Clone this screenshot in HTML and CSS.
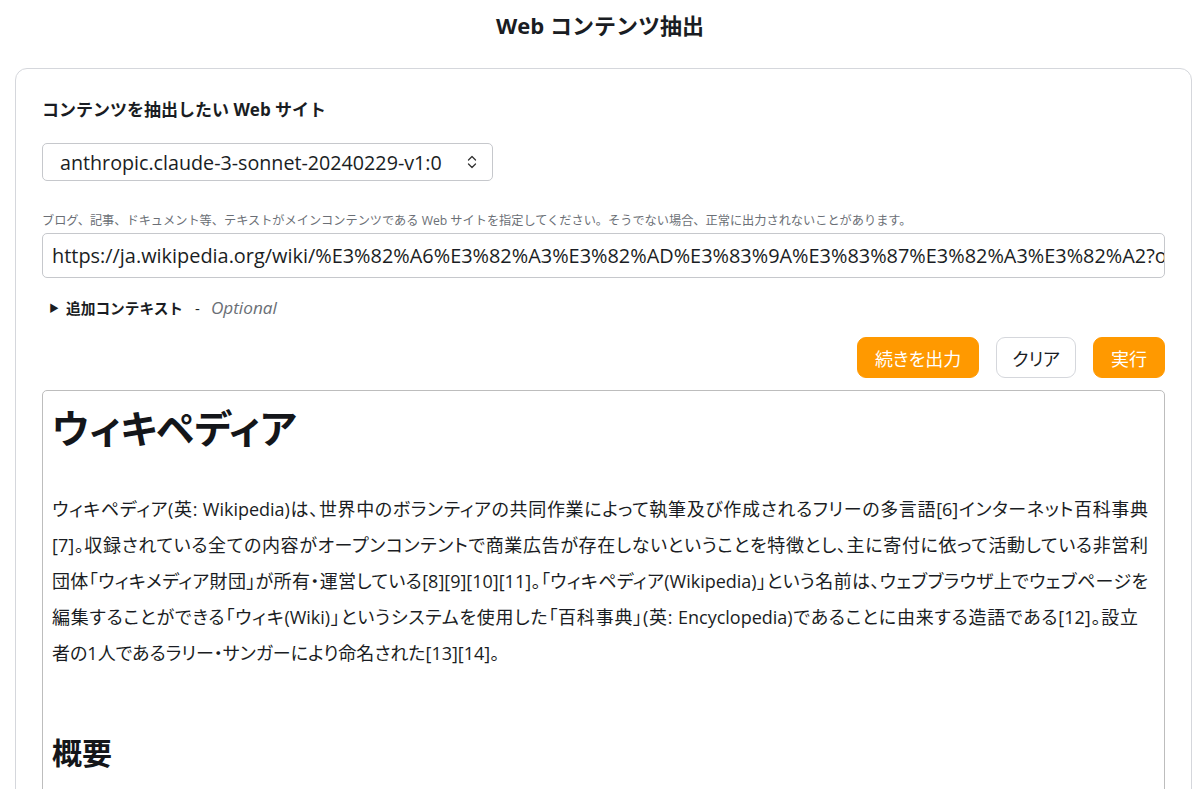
FILE: index.html
```html
<!DOCTYPE html>
<html lang="ja">
<head>
<meta charset="utf-8">
<title>Web コンテンツ抽出</title>
<link rel="stylesheet" href="styles.css">
</head>
<body>
<header class="page-title">Web コンテンツ抽出</header>
<main class="card">
  <div class="field-label">コンテンツを抽出したい Web サイト</div>
  <div class="select">
    <span class="select-text">anthropic.claude-3-sonnet-20240229-v1:0</span>
    <svg class="chev" width="12" height="16" viewBox="0 0 12 16"><path d="M2.5 6 L6 2.5 L9.5 6 M2.5 10 L6 13.5 L9.5 10" fill="none" stroke="#333" stroke-width="1.3" stroke-linecap="round" stroke-linejoin="round"/></svg>
  </div>
  <div class="hint">ブログ、記事、ドキュメント等、テキストがメインコンテンツである Web サイトを指定してください。そうでない場合、正常に出力されないことがあります。</div>
  <div class="url-input">https://ja.wikipedia.org/wiki/%E3%82%A6%E3%82%A3%E3%82%AD%E3%83%9A%E3%83%87%E3%82%A3%E3%82%A2?oldid=1</div>
  <div class="details"><span class="tri">▶</span><span class="det-title">追加コンテキスト</span><span class="dash">-</span><span class="optional">Optional</span></div>
  <div class="actions">
    <button class="btn btn-primary">続きを出力</button>
    <button class="btn btn-light">クリア</button>
    <button class="btn btn-primary">実行</button>
  </div>
  <section class="output">
    <h1>ウィキペディア</h1>
    <p><span class="ln">ウィキペディア(英: Wikipedia)は、世界中のボランティアの共同作業によって執筆及び作成されるフリーの多言語[6]インターネット百科事典</span><span class="ln">[7]。収録されている全ての内容がオープンコンテントで商業広告が存在しないということを特徴とし、主に寄付に依って活動している非営利</span><span class="ln">団体「ウィキメディア財団」が所有・運営している[8][9][10][11]。「ウィキペディア(Wikipedia)」という名前は、ウェブブラウザ上でウェブページを</span><span class="ln ln-short">編集することができる「ウィキ(Wiki)」というシステムを使用した「百科事典」(英: Encyclopedia)であることに由来する造語である[12]。設立</span><span class="ln-last">者の1人であるラリー・サンガーにより命名された[13][14]。</span></p>
    <h2>概要</h2>
  </section>
</main>
</body>
</html>
```
FILE: styles.css
```css
html, body {
  margin: 0;
  padding: 0;
  background: #ffffff;
  height: 100%;
  overflow: hidden;
}
body {
  font-family: "Open Sans", "Noto Sans CJK JP", sans-serif;
  color: #1a1d23;
}
.page-title {
  text-align: center;
  font-size: 22px;
  font-weight: 700;
  line-height: 30px;
  padding-top: 10px;
  height: 68px;
  box-sizing: border-box;
}
.card {
  margin-left: 15px;
  width: 1177px;
  box-sizing: border-box;
  border: 1px solid #d5d7dc;
  border-radius: 12px;
  padding: 30px 26px 0 26px;
  min-height: 800px;
}
.field-label {
  font-size: 17px;
  font-weight: 700;
  line-height: 22px;
  margin-bottom: 22px;
}
.select {
  width: 451px;
  height: 38px;
  box-sizing: border-box;
  border: 1px solid #c6c8cc;
  border-radius: 5px;
  display: flex;
  align-items: center;
  justify-content: space-between;
  padding: 0 14px 0 17px;
}
.select-text {
  font-size: 19.7px;
}
.chev { display: block; }
.hint {
  margin-top: 32px;
  font-size: 12.2px;
  color: #6b6f76;
  line-height: 16px;
}
.url-input {
  margin-top: 4px;
  height: 45px;
  box-sizing: border-box;
  border: 1px solid #c6c8cc;
  border-radius: 5px;
  padding: 0 9px;
  font-size: 19.9px;
  line-height: 43px;
  white-space: nowrap;
  overflow: hidden;
}
.details {
  margin-top: 20px;
  display: flex;
  align-items: center;
  font-size: 15px;
  line-height: 20px;
}
.tri {
  font-size: 10px;
  margin-left: 7px;
  margin-right: 7px;
}
.det-title { font-weight: 700; font-size: 14.7px; }
.dash { margin: 0 11px 0 12px; }
.optional { font-style: italic; color: #6b6f76; font-size: 17.2px; }
.actions {
  margin-top: 19px;
  display: flex;
  justify-content: flex-end;
  gap: 17px;
}
.btn {
  height: 41px;
  border-radius: 9px;
  font-family: "Open Sans", "Noto Sans CJK JP", sans-serif;
  font-size: 18px;
  padding: 0 17px;
  cursor: pointer;
  font-feature-settings: "palt";
}
.btn-primary {
  background: #ff9900;
  color: #ffffff;
  border: 1px solid #ff9900;
}
.btn-light {
  background: #ffffff;
  color: #1a1d23;
  border: 1px solid #d5d7dc;
  padding: 0 15px;
}
.output {
  margin-top: 12px;
  border: 1px solid #bdbdbd;
  border-radius: 5px;
  padding: 0 16px 0 9px;
  min-height: 420px;
}
.output h1 {
  font-size: 39px;
  font-weight: 700;
  margin: 7px 0 0 0;
  line-height: 60px;
  color: #14161a;
  font-feature-settings: "palt";
}
.output p {
  font-size: 18px;
  line-height: 36px;
  margin: 33px 0 0 0;
  font-feature-settings: "palt";
}
.output .ln {
  display: block;
  white-space: nowrap;
  text-align: justify;
  text-align-last: justify;
}
.output .ln-short { margin-right: 10px; }
.output .ln-last { display: block; white-space: nowrap; }
.output h2 {
  font-size: 30px;
  font-weight: 700;
  margin: 62px 0 0 0;
  line-height: 40px;
  color: #14161a;
}
```
